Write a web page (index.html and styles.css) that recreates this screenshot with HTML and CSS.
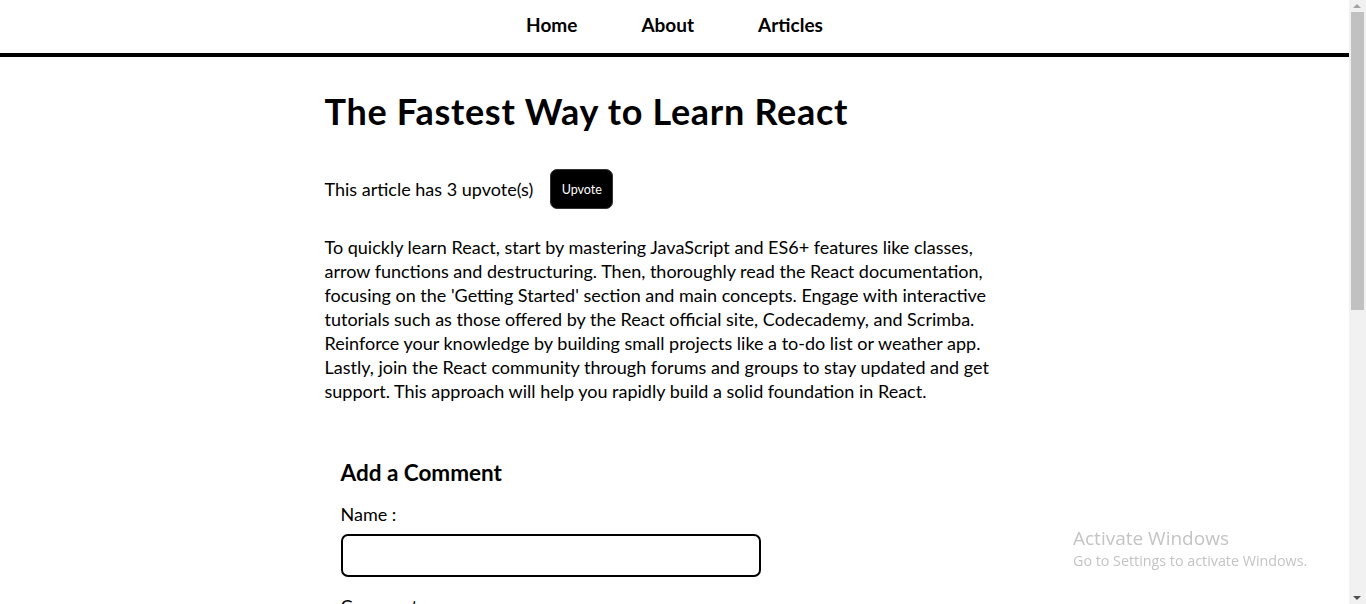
FILE: index.html
```html
<!DOCTYPE html>
<html lang="en">
<head>
<meta charset="utf-8">
<title>The Fastest Way to Learn React</title>
<link rel="stylesheet" href="styles.css">
</head>
<body>
<nav class="nav">
  <a class="nav-link" href="#">Home</a>
  <a class="nav-link" href="#">About</a>
  <a class="nav-link" href="#">Articles</a>
</nav>
<main class="page">
  <h1 class="title">The Fastest Way to Learn React</h1>
  <div class="upvote-row">
    <p class="upvote-text">This article has 3 upvote(s)</p>
    <button class="upvote-btn">Upvote</button>
  </div>
  <p class="content">To quickly learn React, start by mastering JavaScript and ES6+ features like classes, arrow functions and destructuring. Then, thoroughly read the React documentation, focusing on the 'Getting Started' section and main concepts. Engage with interactive tutorials such as those offered by the React official site, Codecademy, and Scrimba. Reinforce your knowledge by building small projects like a to-do list or weather app. Lastly, join the React community through forums and groups to stay updated and get support. This approach will help you rapidly build a solid foundation in React.</p>
  <section class="comment-form">
    <h2 class="form-title">Add a Comment</h2>
    <label class="field-label">Name :</label>
    <input class="field-input" type="text">
    <label class="field-label field-label-next">Comment :</label>
    <textarea class="field-area"></textarea>
  </section>
</main>
<div class="watermark">
  <div class="wm-title">Activate Windows</div>
  <div class="wm-sub">Go to Settings to activate Windows.</div>
</div>
<div class="scrollbar">
  <div class="sb-arrow sb-up"></div>
  <div class="sb-thumb"></div>
  <div class="sb-arrow sb-down"></div>
</div>
</body>
</html>
```
FILE: styles.css
```css
html {
  overflow: hidden;
  height: 100%;
}
body {
  margin: 0 17px 0 0;
  font-family: Lato, "Open Sans", sans-serif;
  color: #000;
  background: #fff;
}
.nav {
  height: 53px;
  border-bottom: 4px solid #000;
  display: flex;
  justify-content: center;
  align-items: center;
  gap: 64px;
}
.nav-link {
  color: #000;
  text-decoration: none;
  font-weight: 700;
  font-size: 19px;
  line-height: 24px;
  margin-top: -3px;
}
.page {
  max-width: 700px;
  margin: 0 auto;
}
.title {
  margin: 32px 0 0;
  font-size: 36px;
  letter-spacing: 0.7px;
  line-height: 44px;
  font-weight: 700;
}
.upvote-row {
  margin-top: 36px;
  display: flex;
  align-items: center;
  height: 40px;
}
.upvote-text {
  margin: 0;
  font-size: 18px;
  line-height: 24px;
}
.upvote-btn {
  margin-left: 17px;
  width: 63px;
  height: 40px;
  background: #000;
  color: #fff;
  border: 1px solid #333;
  border-radius: 7px;
  font-family: inherit;
  font-size: 12.5px;
  padding: 0;
}
.content {
  max-width: 690px;
  margin: 26px 0 0;
  font-size: 18px;
  line-height: 24px;
}
.comment-form {
  margin-top: 40px;
  padding: 16px;
  display: flex;
  flex-direction: column;
  align-items: flex-start;
}
.form-title {
  margin: 0;
  font-size: 22.5px;
  line-height: 28px;
  font-weight: 700;
}
.field-label {
  margin-top: 15px;
  font-size: 18px;
  line-height: 24px;
}
.field-label-next {
  margin-top: 17px;
}
.field-input {
  margin-top: 8px;
  width: 420px;
  height: 43px;
  box-sizing: border-box;
  border: 2px solid #000;
  border-radius: 7px;
  font-family: inherit;
  font-size: 16px;
}
.field-area {
  margin-top: 8px;
  width: 420px;
  height: 100px;
  box-sizing: border-box;
  border: 2px solid #000;
  border-radius: 7px;
}
.watermark {
  position: fixed;
  left: 1073px;
  top: 526px;
  color: #c4c4c4;
  font-family: "Open Sans", sans-serif;
}
.wm-title {
  font-size: 19px;
  line-height: 24px;
}
.wm-sub {
  font-size: 14.3px;
  line-height: 21px;
}
.scrollbar {
  position: fixed;
  top: 0;
  right: 0;
  width: 17px;
  height: 100%;
  background: #f1f1f1;
}
.sb-thumb {
  position: absolute;
  top: 12px;
  left: 2px;
  width: 13px;
  height: 298px;
  background: #c1c1c1;
}
.sb-arrow {
  position: absolute;
  left: 4px;
  width: 0;
  height: 0;
  border-left: 4px solid transparent;
  border-right: 4px solid transparent;
}
.sb-up {
  top: 4px;
  border-bottom: 4px solid #a3a3a3;
}
.sb-down {
  bottom: 4px;
  border-top: 4px solid #505050;
}
```
